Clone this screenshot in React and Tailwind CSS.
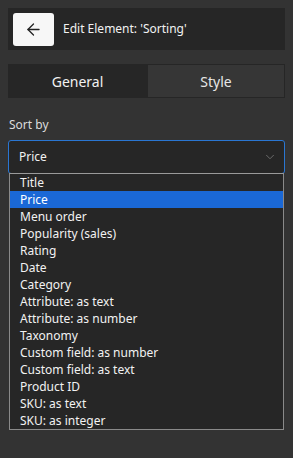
import { ArrowLeft, ChevronDown } from "lucide-react";

const options = [
  "Title",
  "Price",
  "Menu order",
  "Popularity (sales)",
  "Rating",
  "Date",
  "Category",
  "Attribute: as text",
  "Attribute: as number",
  "Taxonomy",
  "Custom field: as number",
  "Custom field: as text",
  "Product ID",
  "SKU: as text",
  "SKU: as integer",
];

export default function App() {
  const selected = "Price";
  return (
    <div
      className="w-[293px] h-[458px] bg-[#333333] text-[#f2f2f2] p-2 overflow-hidden"
      style={{ fontFamily: "'Noto Sans', 'Open Sans', sans-serif" }}
    >
      <div className="h-[42px] bg-[#262626] flex items-center px-[5px] gap-[9px]">
        <button className="w-[41px] h-[33px] bg-[#f7f7f7] rounded-[3px] flex items-center justify-center text-[#222]">
          <ArrowLeft size={19} strokeWidth={1.6} />
        </button>
        <span className="text-[12px]">Edit Element: 'Sorting'</span>
      </div>

      <div className="mt-[14px] h-[34px] flex text-[14px]">
        <div className="w-[139px] bg-[#262626] flex items-center justify-center">
          General
        </div>
        <div className="flex-1 bg-[#363636] border border-[#262626] flex items-center justify-center text-[#e6e6e6]">
          Style
        </div>
      </div>

      <div className="mt-[18px] ml-[1px] text-[12px] text-[#dcdcdc]">Sort by</div>

      <div className="mt-[6px] h-[34px] bg-[#262626] border border-[#2a76d2] rounded-[3px] flex items-center justify-between pl-[10px] pr-[7px] text-[12px]">
        <span>{selected}</span>
        <ChevronDown size={14} strokeWidth={1.6} className="text-[#6f6f6f]" />
      </div>

      <div className="mx-[1px] -mt-[1px] bg-[#262626] border border-[#8a8a8a] border-t-[#9a9a9a] text-[12px]">
        {options.map((o) => (
          <div
            key={o}
            className={
              "h-[17px] leading-[17px] pl-[10px] " +
              (o === selected ? "bg-[#1a68d6] text-white" : "")
            }
          >
            {o}
          </div>
        ))}
      </div>
    </div>
  );
}
